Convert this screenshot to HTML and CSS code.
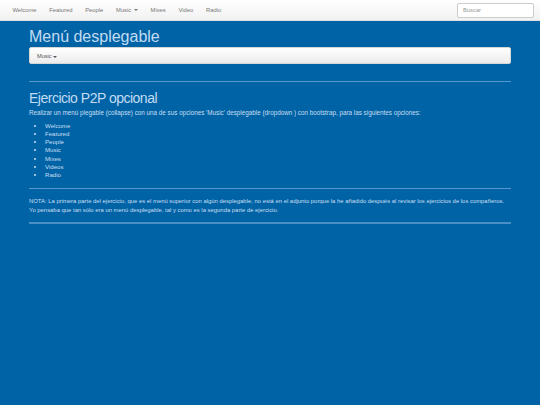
FILE: index.html
```html
<!DOCTYPE html>
<html lang="es">
<head>
    <meta charset="UTF-8">
    <meta name="viewport" content="width=device-width, initial-scale=1.0">
    <title>Menú desplegable</title>
    <link rel="stylesheet" href="styles.css">
</head>
<body>

    <nav class="topbar">
        <ul class="nav-links">
            <li>Welcome</li>
            <li>Featured</li>
            <li>People</li>
            <li>Music <span class="caret"></span></li>
            <li>Mixes</li>
            <li>Video</li>
            <li>Radio</li>
        </ul>
        <input type="text" class="search" placeholder="Buscar">
    </nav>

    <div class="container">
        <h1>Menú desplegable</h1>
        <div class="music-bar">Music<span class="caret"></span></div>

        <hr>

        <h2>Ejercicio P2P opcional</h2>
        <p>Realizar un menú plegable (collapse) con una de sus opciones 'Music' desplegable (dropdown ) con bootstrap, para las siguientes opciones:</p>
        <ul class="options">
            <li>Welcome</li>
            <li>Featured</li>
            <li>People</li>
            <li>Music</li>
            <li>Mixes</li>
            <li>Videos</li>
            <li>Radio</li>
        </ul>

        <hr>

        <p class="note">NOTA: La primera parte del ejercicio, que es el menú superior con algún desplegable, no está en el adjunto porque la he añadido después al revisar los ejercicios de los compañeros.<br>
        Yo pensaba que tan sólo era un menú desplegable, tal y como es la segunda parte de ejercicio.</p>

        <hr class="last">
    </div>

</body>
</html>
```

FILE: styles.css
```css
* {
    margin: 0;
    padding: 0;
    box-sizing: border-box;
}

body {
    font-family: "Liberation Sans", Arial, sans-serif;
    background-color: #0063a6;
    color: #c9dff2;
    height: 405px;
}

.topbar {
    height: 21px;
    display: flex;
    align-items: center;
    justify-content: space-between;
    padding: 0 6px;
    background: linear-gradient(to bottom, #ffffff, #f1f1f1);
    border-bottom: 1px solid #e0e0e0;
}

.nav-links {
    list-style: none;
    display: flex;
}

.nav-links li {
    font-size: 5.8px;
    color: #777;
    padding: 0 6.4px;
}

.caret {
    display: inline-block;
    width: 0;
    height: 0;
    margin-left: 1px;
    vertical-align: middle;
    border-top: 2px solid;
    border-left: 2px solid transparent;
    border-right: 2px solid transparent;
}

.search {
    width: 77px;
    height: 15px;
    border: 1px solid #ccc;
    border-radius: 2px;
    padding-left: 5px;
    font-family: "Liberation Sans", Arial, sans-serif;
    font-size: 5.8px;
    outline: none;
    background: #fff;
}

.search::placeholder {
    color: #999;
}

.container {
    width: 482px;
    margin: 0 auto;
    padding-top: 6px;
}

h1 {
    font-size: 16px;
    font-weight: normal;
    color: #c3dcf2;
    line-height: 19px;
    margin-bottom: 1px;
}

.music-bar {
    height: 17px;
    line-height: 17px;
    padding-left: 7px;
    font-size: 5.6px;
    color: #555;
    border-radius: 2px;
    border: 1px solid #d6d6d6;
    background: linear-gradient(to bottom, #ffffff, #ececec);
}

hr {
    border: 0;
    border-top: 1px solid #5797cc;
    margin: 17px 0 8px 0;
}

h2 {
    font-size: 14px;
    letter-spacing: -0.5px;
    font-weight: normal;
    color: #c3dcf2;
    line-height: 16px;
    margin-bottom: 3px;
}

p {
    font-size: 6.3px;
    line-height: 8.5px;
}

.options {
    margin: 4px 0 0 9px;
    padding-left: 7px;
}

.options li {
    font-size: 6.1px;
    line-height: 8.3px;
}

.options + hr {
    margin: 8px 0 8px 0;
}

.note {
    font-size: 5.9px;
    line-height: 9px;
    white-space: nowrap;
}

hr.last {
    border-top: 2px solid #4a8ec6;
    margin: 7px 0 0 0;
}
```
